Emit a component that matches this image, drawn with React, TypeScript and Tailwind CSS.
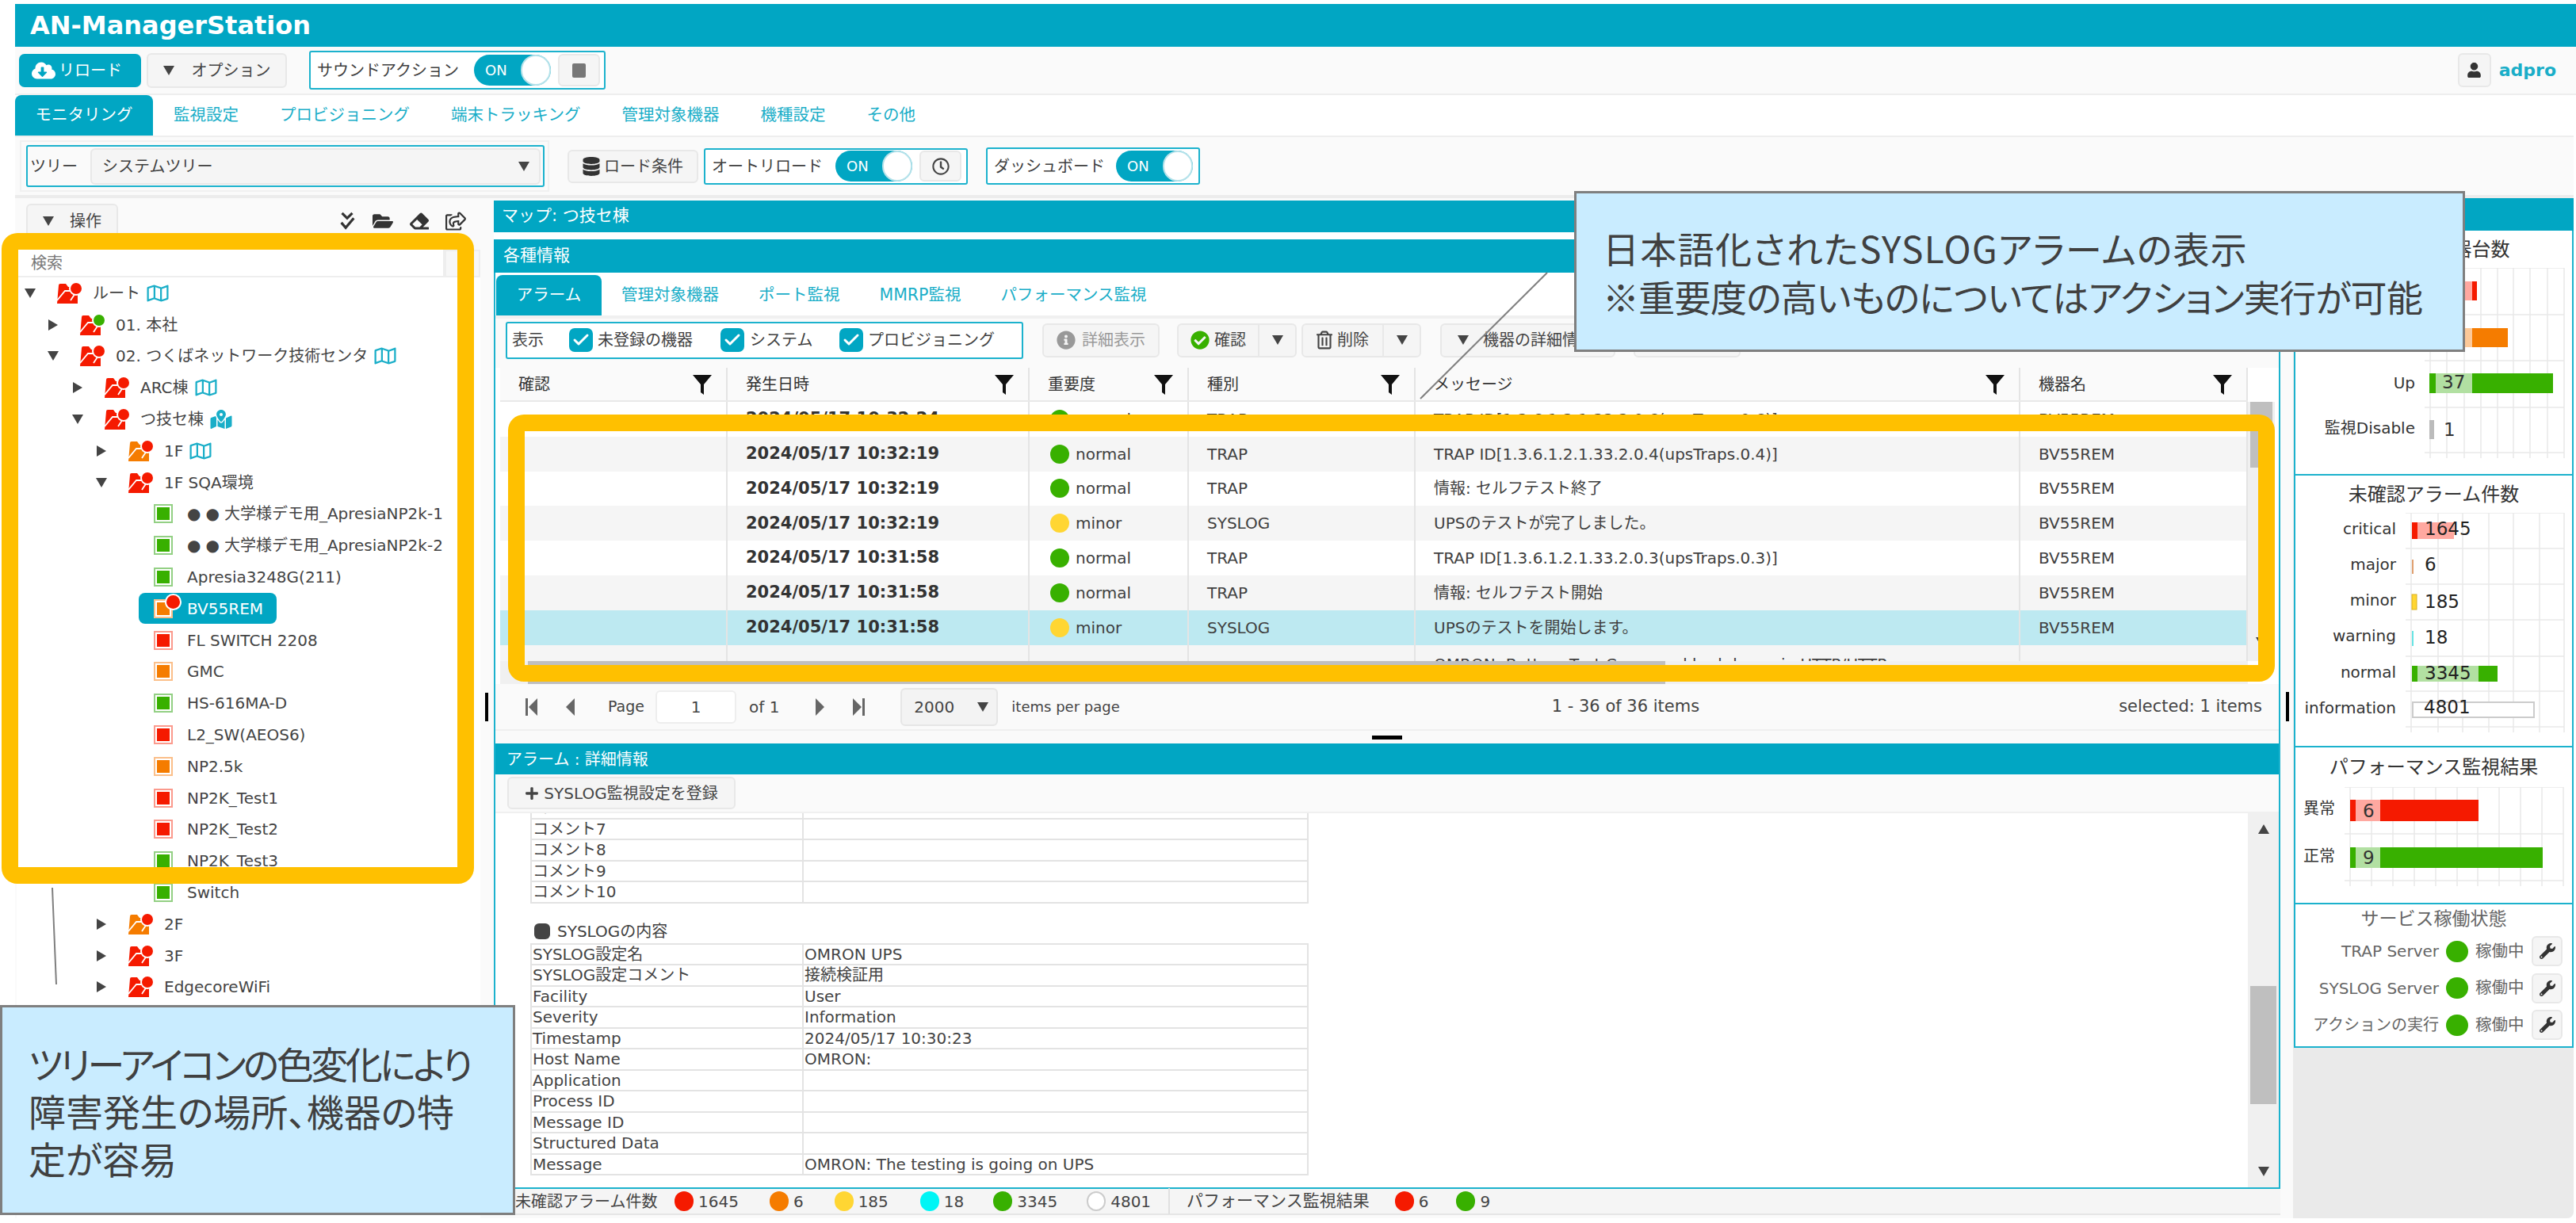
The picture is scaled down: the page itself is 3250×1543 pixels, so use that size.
import React from 'react';
import { Check } from 'lucide-react';
import {
  FaCloudDownloadAlt, FaDatabase, FaRegClock, FaUser, FaFolderOpen, FaEraser, FaRegShareSquare,
  FaRegMap, FaMapMarkedAlt, FaInfoCircle, FaCheckCircle, FaRegTrashAlt, FaPlus, FaWrench,
  FaEllipsisH, FaBars, FaRegFileAlt,
} from 'react-icons/fa';

const Caret = ({ className = '' }: { className?: string }) => (
  <svg viewBox="0 0 14 12" className={`w-[14px] h-[12px] shrink-0 ${className}`}>
    <path d="M0 0h14L7 12z" fill="#444" />
  </svg>
);

const CaretRight = () => (
  <svg viewBox="0 0 12 14" className="w-[12px] h-[14px] shrink-0">
    <path d="M0 0l12 7L0 14z" fill="#444" />
  </svg>
);

const Btn = ({ className = '', children }: { className?: string; children?: React.ReactNode }) => (
  <div className={`flex items-center justify-center shrink-0 rounded-[6px] border-2 border-[#e8e8e8] bg-[#f5f5f5] text-[20px] text-[#444] ${className}`}>
    {children}
  </div>
);

const Toggle = () => (
  <div className="flex items-center shrink-0 w-[97px] h-[39px] rounded-full bg-[#01a6c3] pl-[14px]">
    <span className="text-[18px] text-white">ON</span>
    <span className="ml-auto w-[38px] h-[39px] rounded-full bg-white border-2 border-[#b5e2ea]" />
  </div>
);

const Folder = ({ color, dot = '#f51a00' }: { color: string; dot?: string }) => (
  <svg viewBox="0 0 34 30" className="w-[34px] h-[30px] shrink-0">
    <path d="M1 28L3 5a2 2 0 0 1 2-2h7l3 4h12v21z" fill={color} />
    <path d="M1 24L11 12h15l-8 12" fill="none" stroke="#fff" strokeWidth="1.8" />
    <circle cx="25" cy="9" r="8" fill={dot} stroke="#fff" strokeWidth="2" />
  </svg>
);

const Leaf = ({ color }: { color: 'g' | 'r' | 'o' }) => {
  const cls = {
    g: ['border-[#93d084]', 'bg-[#38b000]'],
    r: ['border-[#fb9a8d]', 'bg-[#f51a00]'],
    o: ['border-[#fbbf8a]', 'bg-[#f57c00]'],
  }[color];
  return (
    <span className={`block w-[24px] h-[24px] shrink-0 border-2 p-[2px] bg-white ${cls[0]}`}>
      <span className={`block w-full h-full ${cls[1]}`} />
    </span>
  );
};

type Node = { t: string; l: number; c: string; open?: boolean; dot?: string; map?: 'reg' | 'mark' };
type LeafRow = { t: string; leaf: 'g' | 'r' | 'o'; sel?: boolean; demo?: boolean };

const RED = '#f51a00';
const ORG = '#f57c00';

const tree: (Node | LeafRow)[] = [
  { t: 'ルート', l: 0, c: RED, open: true, map: 'reg' },
  { t: '01. 本社', l: 1, c: RED, dot: '#38b000' },
  { t: '02. つくばネットワーク技術センタ', l: 1, c: RED, open: true, map: 'reg' },
  { t: 'ARC棟', l: 2, c: RED, map: 'reg' },
  { t: 'つ技セ棟', l: 2, c: RED, open: true, map: 'mark' },
  { t: '1F', l: 3, c: ORG, map: 'reg' },
  { t: '1F SQA環境', l: 3, c: RED, open: true },
  { t: '大学様デモ用_ApresiaNP2k-1', leaf: 'g', demo: true },
  { t: '大学様デモ用_ApresiaNP2k-2', leaf: 'g', demo: true },
  { t: 'Apresia3248G(211)', leaf: 'g' },
  { t: 'BV55REM', leaf: 'o', sel: true },
  { t: 'FL SWITCH 2208', leaf: 'r' },
  { t: 'GMC', leaf: 'o' },
  { t: 'HS-616MA-D', leaf: 'g' },
  { t: 'L2_SW(AEOS6)', leaf: 'r' },
  { t: 'NP2.5k', leaf: 'o' },
  { t: 'NP2K_Test1', leaf: 'r' },
  { t: 'NP2K_Test2', leaf: 'r' },
  { t: 'NP2K_Test3', leaf: 'g' },
  { t: 'Switch', leaf: 'g' },
  { t: '2F', l: 3, c: ORG },
  { t: '3F', l: 3, c: RED },
  { t: 'EdgecoreWiFi', l: 3, c: RED },
];

const levelPad = ['pl-[9px]', 'pl-[38px]', 'pl-[69px]', 'pl-[99px]'];

const TreeRow = ({ row }: { row: Node | LeafRow }) => {
  if ('leaf' in row) {
    if (row.sel) {
      return (
        <div className="flex items-center h-[39.8px] pl-[154px]">
          <div className="relative flex items-center w-[174px] h-[39px] rounded-[8px] bg-[#01a6c3] pl-[19px]">
            <Leaf color={row.leaf} />
            <span className="ml-[18px] text-white">{row.t}</span>
            <span className="absolute left-[33px] top-[1px] w-[21px] h-[21px] rounded-full bg-[#f51a00] border-2 border-white" />
          </div>
        </div>
      );
    }
    return (
      <div className="flex items-center h-[39.8px] pl-[173px]">
        <Leaf color={row.leaf} />
        <span className="ml-[18px] whitespace-nowrap">
          {row.demo && <span className="tracking-[6px]">●●</span>}
          {row.t}
        </span>
      </div>
    );
  }
  return (
    <div className={`flex items-center h-[39.8px] ${levelPad[row.l]}`}>
      <span className="flex items-center justify-center w-[16px]">{row.open ? <Caret /> : <CaretRight />}</span>
      <span className="ml-[25px]"><Folder color={row.c} dot={row.dot} /></span>
      <span className="ml-[12px] whitespace-nowrap">{row.t}</span>
      {row.map === 'reg' && <FaRegMap className="ml-[8px] w-[28px] h-[24px] text-[#1aaec8]" />}
      {row.map === 'mark' && <FaMapMarkedAlt className="ml-[8px] w-[28px] h-[24px] text-[#1aaec8]" />}
    </div>
  );
};

const Filter = () => (
  <svg viewBox="0 0 24 26" className="w-[24px] h-[26px] shrink-0">
    <path d="M0 1h24l-10 12v13l-4-3V13z" fill="#111" />
  </svg>
);

const cols = 'grid grid-cols-[287px_381px_201px_286px_763px_287px]';

const headers = ['確認', '発生日時', '重要度', '種別', 'メッセージ', '機器名'];

const rows = [
  { d: '2024/05/17 10:32:24', s: 'normal', k: 'TRAP', m: 'TRAP ID[1.3.6.1.2.1.33.2.0.6(upsTraps.0.6)]', bg: 'bg-white' },
  { d: '2024/05/17 10:32:19', s: 'normal', k: 'TRAP', m: 'TRAP ID[1.3.6.1.2.1.33.2.0.4(upsTraps.0.4)]', bg: 'bg-[#f5f5f5]' },
  { d: '2024/05/17 10:32:19', s: 'normal', k: 'TRAP', m: '情報: セルフテスト終了', bg: 'bg-white' },
  { d: '2024/05/17 10:32:19', s: 'minor', k: 'SYSLOG', m: 'UPSのテストが完了しました。', bg: 'bg-[#f5f5f5]' },
  { d: '2024/05/17 10:31:58', s: 'normal', k: 'TRAP', m: 'TRAP ID[1.3.6.1.2.1.33.2.0.3(upsTraps.0.3)]', bg: 'bg-white' },
  { d: '2024/05/17 10:31:58', s: 'normal', k: 'TRAP', m: '情報: セルフテスト開始', bg: 'bg-[#f5f5f5]' },
  { d: '2024/05/17 10:31:58', s: 'minor', k: 'SYSLOG', m: 'UPSのテストを開始します。', bg: 'bg-[#bde9f1]' },
];

const Cell = ({ className = '', children }: { className?: string; children?: React.ReactNode }) => (
  <div className={`flex items-center border-r-2 border-[#e4e4e4] pl-[23px] whitespace-nowrap overflow-hidden ${className}`}>{children}</div>
);

const Box = ({ className = '' }: { className?: string }) => <Check strokeWidth={3} className={`p-[3px] w-[30px] h-[30px] rounded-[7px] bg-[#01a6c3] text-white shrink-0 ${className}`} />;

const Dt = ({ rows: list }: { rows: [string, string][] }) => (
  <table className="w-[982px] table-fixed border-collapse text-[20px] leading-[24px] text-[#444]">
    <tbody>
      {list.map(([a, b]) => (
        <tr key={a} className="h-[26.5px]">
          <td className="w-[343px] border-2 border-[#e3e3e3] pl-[1px] whitespace-nowrap overflow-hidden">{a}</td>
          <td className="border-2 border-[#e3e3e3] pl-[1px] whitespace-nowrap">{b}</td>
        </tr>
      ))}
    </tbody>
  </table>
);

const StatusItem = ({ c, n, className = '' }: { c: string; n: string; className?: string }) => (
  <span className={`flex items-center ${className}`}>
    <span className={`w-[24px] h-[25px] rounded-full ${c}`} />
    <span className="ml-[6px]">{n}</span>
  </span>
);

const Grid = ({ xs, ys }: { xs: number[]; ys: number[] }) => (
  <g stroke="#e9e9e9" strokeWidth="1.5">
    {xs.map(x => <line key={x} x1={x} x2={x} y1={ys[0]} y2={ys[ys.length - 1] + 7} />)}
    {ys.map(y => <line key={y} x1={xs[0] - 7} x2={xs[xs.length - 1]} y1={y} y2={y} />)}
  </g>
);

const Svc = ({ name }: { name: string }) => (
  <div className="flex items-center h-[46.5px] text-[20px] text-[#666]">
    <span className="w-[181px] text-right whitespace-nowrap">{name}</span>
    <span className="ml-[9px] w-[28px] h-[27px] rounded-full bg-[#38b000]" />
    <span className="ml-[9px] w-[62px] whitespace-nowrap text-[20.5px]">稼働中</span>
    <Btn className="ml-[9px] w-[39px] h-[38px]"><FaWrench className="w-[20px] h-[20px] text-[#333]" /></Btn>
  </div>
);

export default function App() {
  return (
    <div className="relative w-[3250px] h-[1543px] overflow-hidden bg-white pt-[5px] pl-[19px] font-['DejaVu_Sans','Noto_Sans_CJK_JP',sans-serif] text-[20px] text-[#404040]">
      {/* title */}
      <div className="flex items-center h-[54px] w-[3231px] bg-[#01a6c3] pl-[19px] text-[32px] font-bold text-white">AN-ManagerStation</div>

      {/* toolbar */}
      <div className="flex items-center h-[61px] w-[3231px] bg-[#fafafa] border-b-2 border-[#eee] pl-[5px]">
        <div className="flex items-center w-[154px] h-[42px] rounded-[7px] bg-[#01a6c3] pl-[16px] text-white">
          <FaCloudDownloadAlt className="w-[30px] h-[26px]" />
          <span className="ml-[4px]">リロード</span>
        </div>
        <Btn className="ml-[7px] w-[177px] h-[44px] gap-[22px]"><Caret /><span>オプション</span></Btn>
        <div className="flex items-center ml-[28px] w-[374px] h-[49px] border-2 border-[#1cb2cd] rounded-[3px] bg-white pl-[8px]">
          <span className="w-[198px] whitespace-nowrap">サウンドアクション</span>
          <Toggle />
          <Btn className="ml-[9px] w-[53px] h-[41px]"><span className="w-[17px] h-[18px] rounded-[2px] bg-[#777]" /></Btn>
        </div>
        <Btn className="ml-auto w-[42px] h-[43px]"><FaUser className="w-[19px] h-[19px] text-[#333]" /></Btn>
        <span className="ml-[10px] mr-[25px] text-[22px] font-bold text-[#1aaec8]">adpro</span>
      </div>

      {/* tabs */}
      <div className="flex items-stretch h-[51px] w-[3231px] text-[20.5px] text-[#1aaec8]">
        <div className="flex items-center justify-center w-[174px] rounded-t-[8px] bg-[#01a6c3] text-white">モニタリング</div>
        {['監視設定', 'プロビジョニング', '端末トラッキング', '管理対象機器', '機種設定', 'その他'].map(t => (
          <div key={t} className="flex items-center px-[26px] whitespace-nowrap">{t}</div>
        ))}
      </div>

      {/* toolbar 2 */}
      <div className="flex items-center h-[75px] w-[3228px] bg-[#fafafa] border-t-2 border-[#eee] pl-[6px]">
        <div className="w-[668px] h-[65px] border-2 border-[#f1f1f1] p-[4px] pl-[6px]">
          <div className="flex items-center h-full border-2 border-[#1cb2cd] rounded-[3px] pl-[3px] pr-[3px]">
            <span className="w-[76px] whitespace-nowrap">ツリー</span>
            <div className="flex flex-1 items-center h-[46px] rounded-[6px] border-2 border-[#e8e8e8] bg-[#f5f5f5] pl-[13px] pr-[12px]">
              <span>システムツリー</span>
              <Caret className="ml-auto" />
            </div>
          </div>
        </div>
        <Btn className="ml-[23px] w-[165px] h-[42px] gap-[5px]"><FaDatabase className="w-[22px] h-[24px] text-[#333]" /><span>ロード条件</span></Btn>
        <div className="flex items-center ml-[7px] w-[333px] h-[46px] border-2 border-[#1cb2cd] rounded-[3px] bg-white pl-[8px]">
          <span className="w-[156px] whitespace-nowrap">オートリロード</span>
          <Toggle />
          <Btn className="ml-[9px] w-[53px] h-[39px]"><FaRegClock className="w-[22px] h-[22px] text-[#444]" /></Btn>
        </div>
        <div className="flex items-center ml-[23px] w-[270px] h-[47px] border-2 border-[#1cb2cd] rounded-[3px] bg-white pl-[8px]">
          <span className="w-[154px] whitespace-nowrap">ダッシュボード</span>
          <Toggle />
        </div>
      </div>

      {/* main */}
      <div className="flex w-[3228px] h-[1291px] bg-[#fafafa] border-t-4 border-[#ececec] rounded-br-[8px]">
        {/* left panel */}
        <div className="w-[587px] shrink-0 pl-[2px]">
          <div className="flex items-center h-[65px] pl-[12px] pr-[18px] pb-[8px]">
            <Btn className="w-[116px] h-[44px] gap-[20px]"><Caret /><span>操作</span></Btn>
            <span className="ml-auto flex items-center gap-[21px] text-[#333]">
              <svg viewBox="0 0 22 26" className="w-[22px] h-[24px]">
                <path d="M4 2l7 7 7-7M3 15l6 7L20 9" fill="none" stroke="#333" strokeWidth="3.5" />
              </svg>
              <FaFolderOpen className="w-[26px] h-[24px]" />
              <FaEraser className="w-[24px] h-[24px]" />
              <FaRegShareSquare className="w-[26px] h-[24px]" />
            </span>
          </div>
          <div className="flex h-[35px] bg-white">
            <div className="flex items-center w-[540px] border-b-2 border-r-2 border-[#eee] pl-[18px] text-[#777]">検索</div>
            <div className="flex-1 border-2 border-[#eee] bg-[#f7f7f7]" />
          </div>
          <div className="h-[1187px] bg-white overflow-hidden text-[20px] text-[#444]">
            {tree.map(r => <TreeRow key={r.t} row={r} />)}
          </div>
        </div>

        {/* splitter */}
        <div className="relative w-[17px] shrink-0" />

        {/* center */}
        <div className="w-[2254px] shrink-0 pt-[3px]">
          <div className="flex items-center h-[40px] bg-[#01a6c3] pl-[10px] text-[21px] text-white">マップ: つ技セ棟</div>
          <div className="h-[9px] bg-white" />
          <div className="flex flex-col h-[1198px] border-x-2 border-b-2 border-[#1cb2cd] bg-white">
            <div className="flex items-center h-[42px] shrink-0 -mx-[2px] bg-[#01a6c3] pl-[12px] text-[21px] text-white">各種情報</div>

            <div className="flex items-stretch h-[54px] shrink-0 pt-[3px] text-[20.5px] text-[#1aaec8]">
              <div className="flex items-center justify-center ml-[1px] w-[133px] rounded-t-[8px] bg-[#01a6c3] text-white">アラーム</div>
              {['管理対象機器', 'ポート監視', 'MMRP監視', 'パフォーマンス監視'].map(t => (
                <div key={t} className="flex items-center px-[25px] whitespace-nowrap">{t}</div>
              ))}
            </div>
            <div className="h-[4px] shrink-0 bg-[#f0f0f0]" />

            {/* alarm toolbar */}
            <div className="flex items-center h-[62px] shrink-0 bg-[#fafafa] pl-[13px] pb-[8px]">
              <div className="flex items-center w-[653px] h-[47px] border-2 border-[#1cb2cd] rounded-[3px] bg-white pl-[6px] whitespace-nowrap">
                <span className="w-[72px]">表示</span>
                <Box />
                <span className="ml-[6px] w-[155px]">未登録の機器</span>
                <Box />
                <span className="ml-[7px] w-[113px]">システム</span>
                <Box />
                <span className="ml-[6px]">プロビジョニング</span>
              </div>
              <Btn className="ml-[24px] w-[148px] h-[43px] gap-[8px] text-[#999]"><FaInfoCircle className="w-[24px] h-[24px] text-[#999]" /><span>詳細表示</span></Btn>
              <Btn className="ml-[22px] w-[151px] h-[43px]">
                <span className="flex flex-1 items-center justify-center gap-[6px] h-full">
                  <FaCheckCircle className="w-[24px] h-[24px] text-[#38b000]" /><span>確認</span>
                </span>
                <span className="flex items-center justify-center w-[47px] h-full border-l-2 border-[#e8e8e8]"><Caret /></span>
              </Btn>
              <Btn className="ml-[6px] w-[151px] h-[43px]">
                <span className="flex flex-1 items-center justify-center gap-[6px] h-full">
                  <FaRegTrashAlt className="w-[20px] h-[24px] text-[#444]" /><span>削除</span>
                </span>
                <span className="flex items-center justify-center w-[47px] h-full border-l-2 border-[#e8e8e8]"><Caret /></span>
              </Btn>
              <Btn className="ml-[24px] w-[221px] h-[43px] justify-start pl-[20px] gap-[18px] whitespace-nowrap overflow-hidden"><Caret /><span>機器の詳細情報</span></Btn>
              <Btn className="ml-[23px] w-[135px] h-[43px]" />
              <span className="ml-auto mr-[48px] flex items-center gap-[50px] text-[#444]">
                <FaEllipsisH className="w-[18px] h-[18px]" />
                <FaBars className="w-[18px] h-[18px]" />
                <FaRegFileAlt className="w-[18px] h-[20px]" />
              </span>
            </div>

            {/* alarm table */}
            <div className="flex flex-col ml-[6px] w-[2239px] shrink-0">
              <div className={`${cols} w-[2205px] h-[43px] bg-[#fafafa] border-b-2 border-[#e9e9e9] text-[20px] text-[#333]`}>
                {headers.map(h => (
                  <Cell key={h} className="justify-between pr-[18px]"><span>{h}</span><Filter /></Cell>
                ))}
              </div>
              <div className="flex h-[327px]">
                <div className="w-[2205px] overflow-hidden">
                  {rows.map(r => (
                    <div key={r.m + r.bg} className={`${cols} h-[43.8px] ${r.bg}`}>
                      <Cell />
                      <Cell className="font-bold text-[21px] text-[#333]">{r.d}</Cell>
                      <Cell className="pl-[26px] gap-[8px]">
                        <span className={`w-[24px] h-[24px] rounded-full ${r.s === 'normal' ? 'bg-[#38b000]' : 'bg-[#ffd633]'}`} />
                        {r.s}
                      </Cell>
                      <Cell>{r.k}</Cell>
                      <Cell>{r.m}</Cell>
                      <Cell>BV55REM</Cell>
                    </div>
                  ))}
                  <div className={`${cols} h-[20px] bg-[#f5f5f5] overflow-hidden`}>
                    <Cell /><Cell /><Cell /><Cell />
                    <div className="border-r-2 border-[#e4e4e4] pl-[23px] pt-[9px] whitespace-nowrap overflow-hidden">OMRON: Battery Test Command had done via HTTP/HTTPs</div>
                    <Cell />
                  </div>
                </div>
                <div className="flex-1 bg-[#f0f0f0] px-[3px]">
                  <div className="h-[83px] bg-[#bfbfbf]" />
                  <Caret className="mx-auto mt-[214px]" />
                </div>
              </div>
              <div className="w-[2205px] h-[29px] bg-[#f0f0f0]">
                <div className="ml-[35px] w-[1435px] h-full bg-[#bfbfbf]" />
              </div>
            </div>

            {/* pager */}
            <div className="flex items-center h-[59px] shrink-0 bg-[#fafafa] border-b-2 border-[#f0f0f0] pl-[38px] pr-[21px] whitespace-nowrap text-[#444]">
              <svg viewBox="0 0 15 22" className="w-[15px] h-[22px]"><path d="M0 0h3v22H0zM15 0v22L4 11z" fill="#666" /></svg>
              <svg viewBox="0 0 11 22" className="ml-[36px] w-[11px] h-[22px]"><path d="M11 0v22L0 11z" fill="#666" /></svg>
              <span className="ml-[42px] text-[19px]">Page</span>
              <div className="flex items-center justify-center ml-[14px] w-[102px] h-[42px] rounded-[6px] border-2 border-[#eee] bg-white">1</div>
              <span className="ml-[16px]">of 1</span>
              <svg viewBox="0 0 11 22" className="ml-[46px] w-[11px] h-[22px]"><path d="M0 0v22l11-11z" fill="#666" /></svg>
              <svg viewBox="0 0 15 22" className="ml-[36px] w-[15px] h-[22px]"><path d="M0 0v22l11-11zM12 0h3v22h-3z" fill="#666" /></svg>
              <div className="flex items-center ml-[45px] w-[123px] h-[48px] rounded-[6px] border-2 border-[#e6e6e6] bg-[#f3f3f3] pl-[15px] pr-[10px]">
                <span>2000</span><Caret className="ml-auto" />
              </div>
              <span className="ml-[17px] text-[18px]">items per page</span>
              <span className="ml-[545px] text-[21px]">1 - 36 of 36 items</span>
              <span className="ml-auto text-[21px]">selected: 1 items</span>
            </div>

            <div className="flex items-center h-[16px] shrink-0 bg-[#fafafa] pl-[1106px]">
              <span className="w-[38px] h-[5px] bg-black" />
            </div>

            {/* detail */}
            <div className="flex items-center h-[39px] shrink-0 bg-[#01a6c3] pl-[14px] text-[20px] text-white">アラーム : 詳細情報</div>
            <div className="flex items-center h-[49px] shrink-0 bg-[#fafafa] border-b-2 border-[#f0f0f0] pl-[15px]">
              <Btn className="w-[288px] h-[41px] gap-[6px]"><FaPlus className="w-[18px] h-[18px] text-[#444]" /><span className="whitespace-nowrap">SYSLOG監視設定を登録</span></Btn>
            </div>
            <div className="flex flex-1 min-h-0 overflow-hidden">
              <div className="w-[2211px] pl-[44px]">
                <div className="-mt-[21px]">
                  <Dt rows={[['コメント6', ''], ['コメント7', ''], ['コメント8', ''], ['コメント9', ''], ['コメント10', '']]} />
                </div>
                <div className="flex items-center h-[50px] pt-[20px] pl-[5px] text-[20px]">
                  <span className="w-[20px] h-[20px] rounded-[6px] bg-[#444]" />
                  <span className="ml-[9px]">SYSLOGの内容</span>
                </div>
                <Dt rows={[
                  ['SYSLOG設定名', 'OMRON UPS'],
                  ['SYSLOG設定コメント', '接続検証用'],
                  ['Facility', 'User'],
                  ['Severity', 'Information'],
                  ['Timestamp', '2024/05/17 10:30:23'],
                  ['Host Name', 'OMRON:'],
                  ['Application', ''],
                  ['Process ID', ''],
                  ['Message ID', ''],
                  ['Structured Data', ''],
                  ['Message', 'OMRON: The testing is going on UPS'],
                ]} />
              </div>
              <div className="flex-1 flex flex-col bg-[#f0f0f0] px-[3px] pt-[14px]">
                <Caret className="mx-auto rotate-180" />
                <div className="mt-[192px] h-[149px] bg-[#bfbfbf]" />
                <Caret className="mx-auto mt-[79px]" />
              </div>
            </div>
          </div>
          <div className="flex items-center h-[33px] bg-[#f5f5f5] border-b-2 border-[#e6e6e6] whitespace-nowrap text-[#444]">
            <span className="ml-[27px] w-[201px]">未確認アラーム件数</span>
            <StatusItem c="bg-[#f51a00]" n="1645" />
            <StatusItem c="bg-[#f57c00]" n="6" className="ml-[39px]" />
            <StatusItem c="bg-[#ffd633]" n="185" className="ml-[39px]" />
            <StatusItem c="bg-[#00f5f5]" n="18" className="ml-[40px]" />
            <StatusItem c="bg-[#38b000]" n="3345" className="ml-[37px]" />
            <StatusItem c="bg-white border-2 border-[#ccc]" n="4801" className="ml-[37px]" />
            <span className="ml-[22px] h-[33px] border-l-2 border-[#e0e0e0]" />
            <span className="ml-[21px] text-[21px]">パフォーマンス監視結果</span>
            <StatusItem c="bg-[#f51a00]" n="6" className="ml-[32px]" />
            <StatusItem c="bg-[#38b000]" n="9" className="ml-[35px]" />
          </div>
        </div>

        <div className="w-[16px] shrink-0" />

        {/* right */}
        <div className="flex-1 bg-[#eaeaea] rounded-br-[8px] overflow-hidden">
          <div className="h-[41px] bg-[#01a6c3]" />
          <div className="ml-[1px] w-[353px] h-[307px] border-x-2 border-[#1cb2cd] bg-white">
            <div className="flex items-center justify-center h-[47px] text-[24px] text-[#333]">管理対象機器台数</div>
            <svg viewBox="2895 338 349 260" className="w-[349px] h-[260px]">
              <Grid xs={[3065, 3086, 3108, 3129, 3150, 3170, 3191, 3213, 3234]} ys={[338, 397, 455, 514, 571]} />
              <rect x="3064" y="355" width="60" height="24" fill="#f51a00" />
              <rect x="3072" y="355" width="46" height="24" fill="#ffa8a0" />
              <rect x="3064" y="414" width="99" height="24" fill="#f57c00" />
              <rect x="3072" y="414" width="46" height="24" fill="#fcc999" />
              <rect x="3064" y="471" width="156" height="25" fill="#38b000" />
              <rect x="3072" y="471" width="46" height="25" fill="#b2e0a2" />
              <rect x="3064" y="530" width="6" height="24" fill="#bbb" />
              <g fontSize="20" fill="#333" textAnchor="end">
                <text x="3046" y="490">Up</text>
                <text x="3046" y="547">監視Disable</text>
              </g>
              <g fontSize="23" fill="#333">
                <text x="3080" y="490">37</text>
                <text x="3082" y="550">1</text>
              </g>
            </svg>
          </div>
          <div className="ml-[1px] w-[353px] h-[345px] border-x-2 border-b-2 border-[#1cb2cd] bg-white">
            <div className="flex items-center justify-center h-[49px] text-[24px] text-[#333] border-t-2 border-[#1cb2cd]">未確認アラーム件数</div>
            <svg viewBox="2895 647 349 294" className="w-[349px] h-[294px]">
              <Grid xs={[3041, 3075, 3106, 3139, 3170, 3203, 3234]} ys={[647, 692, 737, 782, 828, 872, 917]} />
              <rect x="3042" y="659" width="53" height="21" fill="#f51a00" />
              <rect x="3049" y="659" width="46" height="21" fill="#ffa8a0" />
              <rect x="3042" y="706" width="2" height="18" fill="#e0a070" />
              <rect x="3042" y="750" width="6" height="19" fill="#ffd633" stroke="#d9b020" />
              <rect x="3042" y="796" width="2" height="19" fill="#66e4e4" />
              <rect x="3042" y="840" width="108" height="20" fill="#38b000" />
              <rect x="3049" y="840" width="77" height="20" fill="#b2e0a2" />
              <rect x="3043" y="886" width="153" height="19" fill="#fff" stroke="#ccc" strokeWidth="2" />
              <g fontSize="20" fill="#333" textAnchor="end">
                <text x="3022" y="674">critical</text>
                <text x="3022" y="719">major</text>
                <text x="3022" y="764">minor</text>
                <text x="3022" y="809">warning</text>
                <text x="3022" y="855">normal</text>
                <text x="3022" y="900">information</text>
              </g>
              <g fontSize="23" fill="#222">
                <text x="3058" y="675">1645</text>
                <text x="3058" y="720">6</text>
                <text x="3058" y="767">185</text>
                <text x="3058" y="812">18</text>
                <text x="3058" y="857">3345</text>
                <text x="3057" y="900">4801</text>
              </g>
            </svg>
          </div>
          <div className="ml-[1px] w-[353px] h-[196px] border-x-2 border-[#1cb2cd] bg-white">
            <div className="flex items-center justify-center h-[50px] text-[24px] text-[#333]">パフォーマンス監視結果</div>
            <svg viewBox="2895 993 349 146" className="w-[349px] h-[146px]">
              <Grid xs={[2964, 2991, 3018, 3045, 3072, 3099, 3125, 3152, 3179, 3206, 3233]} ys={[993, 1052, 1111]} />
              <rect x="2964" y="1009" width="162" height="27" fill="#f51a00" />
              <rect x="2971" y="1009" width="31" height="27" fill="#ffa8a0" />
              <rect x="2964" y="1069" width="243" height="26" fill="#38b000" />
              <rect x="2971" y="1069" width="31" height="26" fill="#b2e0a2" />
              <g fontSize="20" fill="#333">
                <text x="2905" y="1027">異常</text>
                <text x="2905" y="1087">正常</text>
              </g>
              <g fontSize="23" fill="#333">
                <text x="2980" y="1031">6</text>
                <text x="2980" y="1090">9</text>
              </g>
            </svg>
          </div>
          <div className="ml-[1px] w-[353px] h-[183px] border-2 border-[#1cb2cd] bg-white">
            <div className="flex items-center justify-center h-[36px] text-[23px] text-[#666]">サービス稼働状態</div>
            <Svc name="TRAP Server" />
            <Svc name="SYSLOG Server" />
            <Svc name="アクションの実行" />
          </div>
        </div>
      </div>

      {/* splitter handles */}
      <span className="absolute left-[612px] top-[874px] w-[4px] h-[36px] bg-black" />
      <span className="absolute left-[2884px] top-[873px] w-[4px] h-[37px] bg-black" />

      {/* annotation overlays */}
      <div className="absolute left-[2px] top-[294px] w-[596px] h-[821px] rounded-[20px] border-[21px] border-[#ffc000]" />
      <div className="absolute left-[641px] top-[523px] w-[2229px] h-[337px] rounded-[20px] border-[21px] border-[#ffc000]" />
      <svg className="absolute left-0 top-0 w-[3250px] h-[1543px] pointer-events-none" viewBox="0 0 3250 1543">
        <line x1="66" y1="1120" x2="71" y2="1242" stroke="#7f7f7f" strokeWidth="2" />
        <line x1="1952" y1="344" x2="1792" y2="503" stroke="#7f7f7f" strokeWidth="2" />
      </svg>
      <div className="absolute left-0 top-[1268px] flex items-center w-[650px] h-[265px] border-[3px] border-[#7f7f7f] bg-[#c9ecff] pl-[33px] text-[47px] leading-[60px] text-[#404040] [font-family:'Noto_Sans_CJK_JP',sans-serif] [font-feature-settings:'palt']">
        <p>
          <span className="tracking-[-3.5px]">ツリーアイコンの色変化により</span><br />
          障害発生の場所、機器の特<br />
          定が容易
        </p>
      </div>
      <div className="absolute left-[1986px] top-[241px] flex items-center w-[1124px] h-[203px] border-[3px] border-[#7f7f7f] bg-[#c9ecff] pl-[33px] text-[46px] leading-[61px] text-[#404040] [font-family:'Noto_Sans_CJK_JP',sans-serif] [font-feature-settings:'palt']">
        <p className="whitespace-nowrap">
          <span className="tracking-[1.3px]">日本語化されたSYSLOGアラームの表示</span><br />
          <span className="tracking-[-0.7px]">※重要度の高いものについてはアクション実行が可能</span>
        </p>
      </div>
    </div>
  );
}
